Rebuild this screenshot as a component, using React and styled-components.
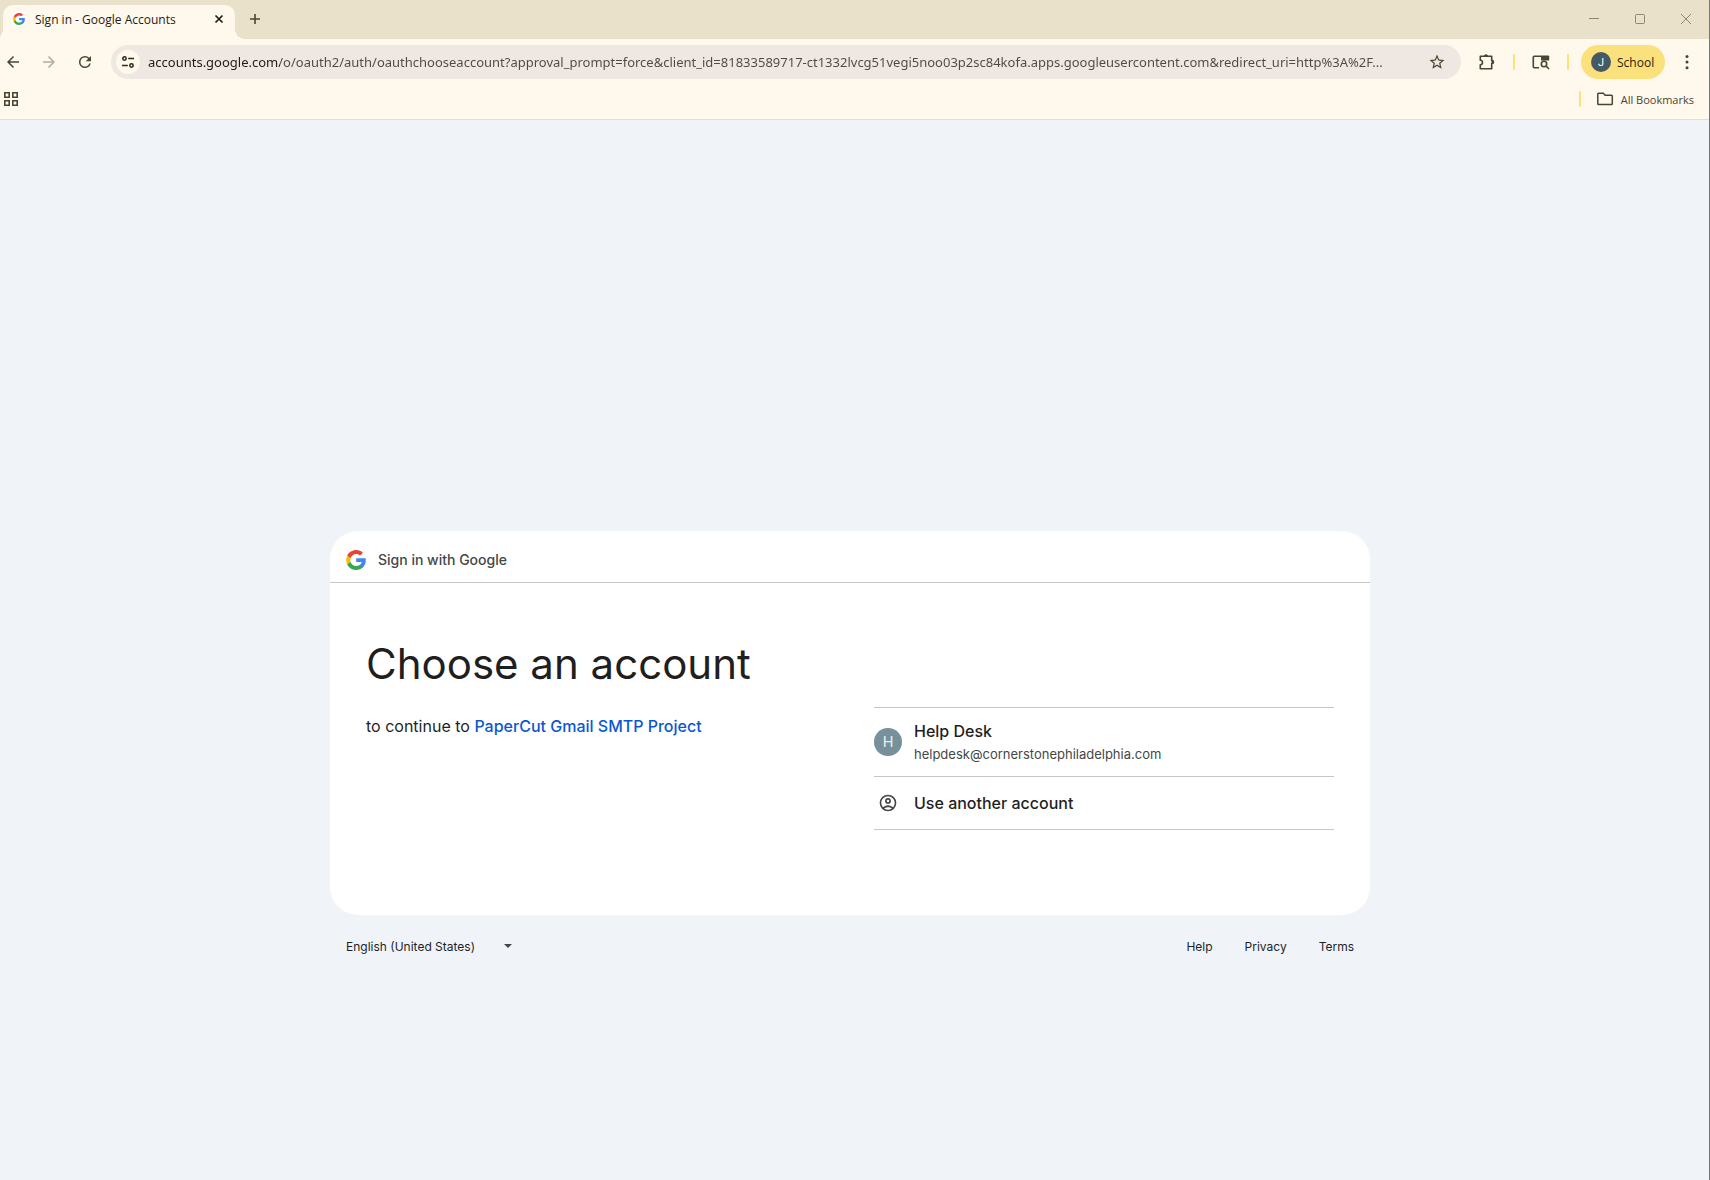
import React, { useState } from 'react'
import styled, { createGlobalStyle } from 'styled-components'

const URL_VALUE = 'accounts.google.com/o/oauth2/auth/oauthchooseaccount?approval_prompt=force&client_id=81833589717-ct1332lvcg51vegi5noo03p2sc84kofa.apps.googleusercontent.com&redirect_uri=http%3A%2F...'

const GlobalStyle = createGlobalStyle`
* { box-sizing: border-box; }
body { margin: 0; background: #f0f4f9; }
button, input, select { font: inherit; color: inherit; }
button { border: 0; padding: 0; background: none; cursor: pointer; }
a { text-decoration: none; }
svg { display: block; flex: none; }
`;
const Window = styled.div`
display: flex;
flex-direction: column;
min-height: 100vh;
border-right: 1px solid #75777a;
font-family: 'Open Sans', 'Noto Sans', sans-serif;
font-size: 12px;
color: #1f1c14;
`;

/* browser chrome */
const TabStrip = styled.div`
display: flex;
align-items: flex-start;
height: 39px;
padding-left: 3px;
background: #e9e1c9;
`;
const Tab = styled.div`
position: relative;
display: flex;
align-items: center;
align-self: flex-end;
gap: 8px;
width: 232px;
height: 34px;
padding: 0 8px 6px;
border-radius: 10px 10px 0 0;
background: #fff8ec;
&::before, &::after {
  content: '';
  position: absolute;
  bottom: 0;
  width: 10px;
  height: 10px;
}
&::before {
  right: 100%;
  background: radial-gradient(circle at 0 0, #e9e1c9 10px, #fff8ec 10px);
}
&::after {
  left: 100%;
  background: radial-gradient(circle at 100% 0, #e9e1c9 10px, #fff8ec 10px);
}
`;
const Favicon = styled.span`
display: grid;
place-items: center;
width: 16px;
height: 16px;
border-radius: 50%;
background: #fff;
`;
const TabTitle = styled.span`
flex: 1;
white-space: nowrap;
`;
const IconButton = styled.button`
display: grid;
place-items: center;
width: ${p => p.$w || 18}px;
height: ${p => p.$h || 18}px;
color: ${p => p.$color || '#4b4530'};
`;
const NewTab = styled(IconButton)`
margin: 0 auto 0 11px;
`;
const Toolbar = styled.div`
display: flex;
align-items: center;
height: 46px;
padding: 0 12px 0 4px;
background: #fff8ec;
`;
const NavButtons = styled.div`
display: flex;
gap: 18px;
margin-right: 17px;
`;
const Omnibox = styled.div`
display: flex;
align-items: center;
flex: 1;
min-width: 0;
height: 34px;
padding: 0 15px 0 5px;
border-radius: 17px;
background: #efe7e1;
`;
const SiteInfo = styled(IconButton)`
border-radius: 50%;
background: #fff8ec;
`;
const UrlInput = styled.input`
flex: 1;
min-width: 0;
margin: 0 8px;
padding: 0;
border: 0;
outline: 0;
font-family: 'Noto Sans', 'Open Sans', sans-serif;
font-size: 13px;
line-height: 20px;
color: transparent;
caret-color: #1f1c14;
background: linear-gradient(90deg, #1f1c14 ${p => p.$host}px, #4e4941 ${p => p.$host}px);
background-clip: text;
-webkit-background-clip: text;
`;
const Actions = styled.div`
display: flex;
align-items: center;
gap: 17px;
padding-left: 17px;
`;
const Divider = styled.span`
width: 2px;
height: 16px;
border-radius: 1px;
background: #fbe17b;
`;
const Profile = styled.button`
display: flex;
align-items: center;
gap: 6px;
width: 84px;
height: 34px;
margin-left: 12px;
padding-left: 10px;
border-radius: 17px;
background: #fbe17b;
`;
const Avatar = styled.span`
display: grid;
place-items: center;
width: ${p => p.$size}px;
height: ${p => p.$size}px;
border-radius: 50%;
background: ${p => p.$bg};
color: ${p => p.$color || '#fff'};
font-family: Roboto, sans-serif;
font-size: ${p => p.$font}px;
`;
const MenuButton = styled(IconButton)`
margin-left: 12px;
`;
const BookmarkBar = styled.div`
display: flex;
align-items: center;
justify-content: space-between;
height: 35px;
padding: 0 15px 6px 2px;
border-bottom: 1px solid #e5ddc9;
background: #fff8ec;
`;
const AllBookmarks = styled.button`
display: flex;
align-items: center;
gap: 6px;
font-size: 11px;
color: #4b4530;
`;
const BookmarkGroup = styled.div`
display: flex;
align-items: center;
gap: 14px;
`;

/* sign in page */
const Page = styled.main`
flex: 1;
padding: 411px 9px 0 0;
background: #f0f4f9;
font-family: Inter, Roboto, sans-serif;
color: #1f1f1f;
`;
const Column = styled.div`
max-width: 1040px;
margin: 0 auto;
`;
const Card = styled.section`
min-height: 384px;
border-radius: 28px;
background: #fff;
`;
const CardHeader = styled.header`
display: flex;
align-items: center;
gap: 12px;
height: 52px;
padding: 6px 16px 0;
border-bottom: 1px solid #c4c7c5;
font-size: 14px;
font-weight: 500;
color: #444746;
`;
const CardBody = styled.div`
display: grid;
grid-template-columns: 1fr 1fr;
gap: 48px;
padding: 55px 36px 84px;
`;
const Heading = styled.h1`
margin: 0 0 24px;
font-size: 42px;
font-weight: 400;
line-height: 52px;
`;
const Subtitle = styled.p`
margin: 0;
font-size: 16px;
line-height: 24px;
`;
const ProjectLink = styled.a`
font-weight: 500;
color: #0b57d0;
`;
const AccountList = styled.ul`
list-style: none;
margin: 69px 0 0;
padding: 0;
border-top: 1px solid #c4c7c5;
`;
const AccountItem = styled.li`
border-bottom: 1px solid #c4c7c5;
`;
const AccountButton = styled.button`
display: flex;
align-items: center;
gap: 12px;
width: 100%;
height: ${p => p.$tall ? 68 : 52}px;
text-align: left;
`;
const IconSlot = styled.span`
display: grid;
place-items: center;
width: 28px;
color: #444746;
`;
const AccountName = styled.span`
display: block;
font-size: 16px;
font-weight: 500;
line-height: 24px;
`;
const AccountEmail = styled.span`
display: block;
font-size: 13px;
line-height: 22px;
color: #444746;
`;
const Footer = styled.footer`
display: flex;
align-items: center;
justify-content: space-between;
height: 62px;
padding: 0 16px;
`;
const Language = styled.label`
display: flex;
align-items: center;
`;
const LanguageSelect = styled.select`
appearance: none;
width: 158px;
padding: 0;
border: 0;
background: none;
`;
const FooterLinks = styled.nav`
display: flex;
gap: 32px;
a { color: #1f1f1f; }
`;

const GoogleLogo = ({ size }) => (
  <svg width={size} height={size} viewBox="0 0 48 48">
    <path fill="#4285F4" d="M47.5 24.55c0-1.63-.15-3.2-.42-4.71H24.5v9.02h12.94c-.58 2.97-2.26 5.48-4.8 7.18v6h7.73c4.52-4.18 7.13-10.33 7.13-17.49z" />
    <path fill="#34A853" d="M24.5 48c6.48 0 11.93-2.13 15.88-5.81l-7.73-6c-2.15 1.45-4.92 2.3-8.15 2.3-6.26 0-11.57-4.22-13.47-9.91H3.05v6.19C6.99 42.62 15.11 48 24.5 48z" />
    <path fill="#FBBC05" d="M11.03 28.58A14.4 14.4 0 0 1 10.28 24c0-1.59.27-3.14.75-4.58v-6.19H3.05A23.9 23.9 0 0 0 .5 24c0 3.87.93 7.54 2.55 10.77l7.98-6.19z" />
    <path fill="#EA4335" d="M24.5 9.55c3.54 0 6.71 1.22 9.21 3.6l6.85-6.85C36.4 2.38 30.95 0 24.5 0 15.11 0 6.99 5.38 3.05 13.23l7.98 6.19c1.9-5.69 7.21-9.87 13.47-9.87z" />
  </svg>
)

const Icon = ({ size = 18, box = 24, children, ...rest }) => (
  <svg width={size} height={size} viewBox={`0 0 ${box} ${box}`} fill="currentColor" {...rest}>{children}</svg>
)

const Line = ({ size, d, width = 1 }) => (
  <svg width={size} height={size} viewBox={`0 0 ${size} ${size}`} fill="none" stroke="currentColor" strokeWidth={width}><path d={d} /></svg>
)

export default function App() {
  const [url, setUrl] = useState(URL_VALUE)
  return (
    <Window>
      <GlobalStyle />
      <TabStrip>
        <Tab>
          <Favicon><GoogleLogo size={12} /></Favicon>
          <TabTitle>Sign in - Google Accounts</TabTitle>
          <IconButton $w={16} $h={16} $color="#1f1c14" aria-label="Close tab">
            <Line size={16} d="M4.5 4.5l7 7M11.5 4.5l-7 7" width={1.7} />
          </IconButton>
        </Tab>
        <NewTab $h={38} aria-label="New tab"><Line size={18} d="M9 4v10M4 9h10" width={1.6} /></NewTab>
        <IconButton $w={46} $h={38} $color="#8b8675" aria-label="Minimize"><Line size={12} d="M1 5.5h10" /></IconButton>
        <IconButton $w={46} $h={38} $color="#8b8675" aria-label="Maximize">
          <svg width="12" height="12" fill="none" stroke="currentColor"><rect x="1.5" y="1.5" width="9" height="9" rx="1" /></svg>
        </IconButton>
        <IconButton $w={46} $h={38} $color="#8b8675" aria-label="Close"><Line size={12} d="M1 1l10 10M11 1L1 11" /></IconButton>
      </TabStrip>
      <Toolbar>
        <NavButtons>
          <IconButton aria-label="Back"><Icon><path d="M20 11H7.83l5.59-5.59L12 4l-8 8 8 8 1.41-1.41L7.83 13H20z" /></Icon></IconButton>
          <IconButton $color="#b3ad9f" aria-label="Forward"><Icon><path d="M12 4l-1.41 1.41L16.17 11H4v2h12.17l-5.58 5.59L12 20l8-8z" /></Icon></IconButton>
          <IconButton aria-label="Reload"><Icon><path d="M17.65 6.35A7.96 7.96 0 0 0 12 4a8 8 0 1 0 7.73 10h-2.08A6 6 0 1 1 12 6c1.66 0 3.14.69 4.22 1.78L13 11h7V4z" /></Icon></IconButton>
        </NavButtons>
        <Omnibox>
          <SiteInfo $w={24} $h={24} $color="#2b271c" aria-label="View site information">
            <svg width="14" height="14" viewBox="0 0 14 14" fill="none" stroke="currentColor" strokeWidth="1.5">
              <circle cx="3.5" cy="3.5" r="1.7" /><path d="M7.2 3.5H13M1 10.5h5.8" /><circle cx="10.5" cy="10.5" r="1.7" />
            </svg>
          </SiteInfo>
          <UrlInput $host={132} aria-label="Address" value={url} onChange={e => setUrl(e.target.value)} />
          <IconButton aria-label="Bookmark this tab">
            <Icon><path d="M22 9.24l-7.19-.62L12 2 9.19 8.63 2 9.24l5.46 4.73L5.82 21 12 17.27 18.18 21l-1.63-7.03zM12 15.4l-3.76 2.27 1-4.28-3.32-2.88 4.38-.38L12 6.1l1.71 4.04 4.38.38-3.32 2.88 1 4.28z" /></Icon>
          </IconButton>
        </Omnibox>
        <Actions>
          <IconButton aria-label="Extensions">
            <svg width="18" height="18" fill="none" stroke="currentColor" strokeWidth="1.6">
              <path d="M2.3 3.3h11.4v4.2a1.5 1.5 0 0 1 0 3v5.2H2.3v-4a2.2 2.2 0 0 0 0-4.4z" strokeLinejoin="round" />
              <path d="M6.3 3a1.8 1.8 0 0 1 3.4 0zM14 7.2a1.8 1.8 0 0 1 0 3.6z" fill="currentColor" strokeWidth="1" />
            </svg>
          </IconButton>
          <Divider />
          <IconButton aria-label="Search side panel">
            <svg width="18" height="18" fill="none" stroke="currentColor" strokeWidth="1.6">
              <path d="M7 14.7H2.3a1 1 0 0 1-1-1V4.3a1 1 0 0 1 1-1H9" />
              <path d="M9 2.5h7.2a1 1 0 0 1 1 1v4H9z" fill="currentColor" stroke="none" />
              <circle cx="12" cy="11" r="2.7" /><path d="M14 13l3 3" />
            </svg>
          </IconButton>
          <Divider />
        </Actions>
        <Profile>
          <Avatar $size={20} $bg="#455a64" $font={11}>J</Avatar>
          School
        </Profile>
        <MenuButton $w={20} aria-label="Menu">
          <Icon><circle cx="12" cy="4.5" r="2" /><circle cx="12" cy="12" r="2" /><circle cx="12" cy="19.5" r="2" /></Icon>
        </MenuButton>
      </Toolbar>
      <BookmarkBar>
        <IconButton aria-label="Apps">
          <svg width="18" height="18" fill="none" stroke="currentColor" strokeWidth="1.6">
            <path d="M2.8 2.8h4.4v4.4H2.8zM10.8 2.8h4.4v4.4h-4.4zM2.8 10.8h4.4v4.4H2.8zM10.8 10.8h4.4v4.4h-4.4z" />
          </svg>
        </IconButton>
        <BookmarkGroup>
          <Divider />
          <AllBookmarks>
            <svg width="20" height="18" fill="none" stroke="currentColor" strokeWidth="1.5">
              <path d="M2.8 4.3a.9.9 0 0 1 .9-1h4.6l1.8 1.9h6.3a.9.9 0 0 1 .9.9v7.6a.9.9 0 0 1-.9.9H3.7a.9.9 0 0 1-.9-.9z" />
            </svg>
            All Bookmarks
          </AllBookmarks>
        </BookmarkGroup>
      </BookmarkBar>
      <Page>
        <Column>
          <Card>
            <CardHeader>
              <GoogleLogo size={20} />
              Sign in with Google
            </CardHeader>
            <CardBody>
              <div>
                <Heading>Choose an account</Heading>
                <Subtitle>to continue to <ProjectLink href="#">PaperCut Gmail SMTP Project</ProjectLink></Subtitle>
              </div>
              <AccountList>
                <AccountItem>
                  <AccountButton $tall>
                    <Avatar $size={28} $bg="#78909c" $font={15} $color="#e8eef0">H</Avatar>
                    <span>
                      <AccountName>Help Desk</AccountName>
                      <AccountEmail>helpdesk@cornerstonephiladelphia.com</AccountEmail>
                    </span>
                  </AccountButton>
                </AccountItem>
                <AccountItem>
                  <AccountButton>
                    <IconSlot>
                      <Icon size={20}>
                        <path d="M12 2a10 10 0 1 0 0 20 10 10 0 0 0 0-20zM7.35 18.5C8.66 17.56 10.26 17 12 17s3.34.56 4.65 1.5a7.95 7.95 0 0 1-9.3 0zm10.79-1.38a9.95 9.95 0 0 0-12.28 0A7.96 7.96 0 0 1 4 12c0-4.42 3.58-8 8-8s8 3.58 8 8c0 1.95-.7 3.73-1.86 5.12z" />
                        <path d="M12 6a3.5 3.5 0 1 0 0 7 3.5 3.5 0 0 0 0-7zm0 5a1.5 1.5 0 1 1 0-3 1.5 1.5 0 0 1 0 3z" />
                      </Icon>
                    </IconSlot>
                    <AccountName>Use another account</AccountName>
                  </AccountButton>
                </AccountItem>
              </AccountList>
            </CardBody>
          </Card>
          <Footer>
            <Language>
              <LanguageSelect aria-label="Language">
                <option>English (United States)</option>
              </LanguageSelect>
              <svg width="8" height="4" fill="#444746"><path d="M0 0h8L4 4z" /></svg>
            </Language>
            <FooterLinks>
              <a href="#">Help</a>
              <a href="#">Privacy</a>
              <a href="#">Terms</a>
            </FooterLinks>
          </Footer>
        </Column>
      </Page>
    </Window>
  )
}
